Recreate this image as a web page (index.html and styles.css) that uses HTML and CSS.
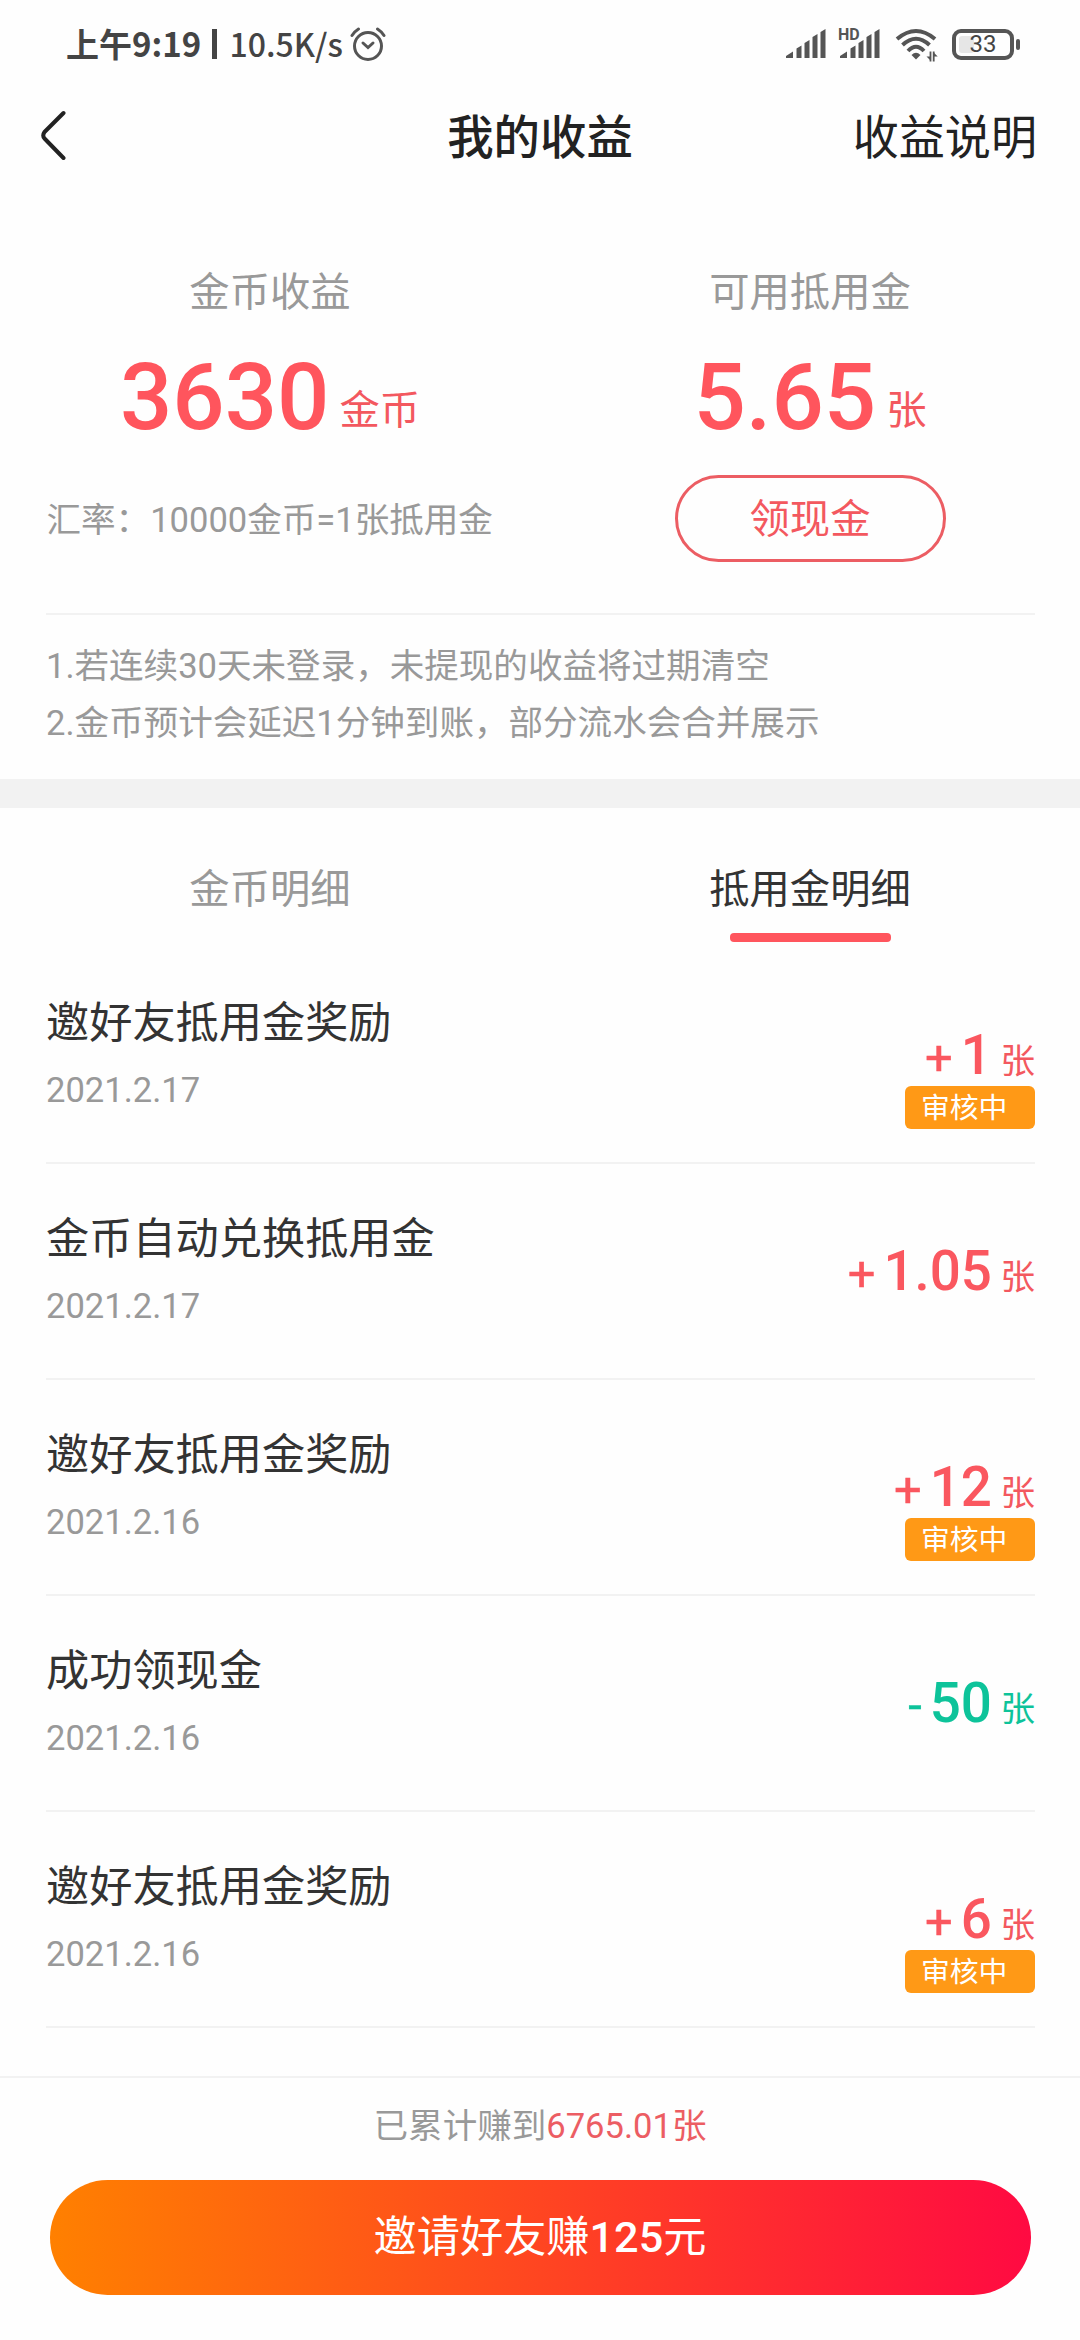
FILE: index.html
```html
<!DOCTYPE html>
<html lang="zh-CN">
<head>
<meta charset="utf-8">
<title>我的收益</title>
<link rel="stylesheet" href="styles.css">
</head>
<body>
<div class="status">
  <span class="time">上午9:19</span>
  <span class="bar"></span>
  <span class="speed">10.5K/s</span>
  <svg class="alarm" width="36" height="36" viewBox="0 0 36 36" fill="none" stroke="#555" stroke-width="3" stroke-linecap="round">
    <circle cx="18" cy="20" r="13.5"/>
    <path d="M2 9.500 Q4.500 5.500 8.500 3M34 9.500 Q31.500 5.500 27.500 3"/>
    <path d="M13 17 L18 21.500 L23 17"/>
  </svg>
  <svg class="signals" width="96" height="36" viewBox="0 0 96 36" fill="#555">
    <path d="M1 30 L8 25.5 V32 H1ZM11.500 22.500 L16.500 19.500 V32 H11.500ZM19.500 17 L24.500 14 V32 H19.500ZM27.500 11 L32.500 8 V32 H27.500ZM35.500 6 L40.500 3 V32 H35.500Z"/>
    <path d="M55 30 L62 25.500 V32 H55ZM65.500 22.500 L70.500 19.500 V32 H65.500ZM73.500 17 L78.500 14 V32 H73.500ZM81.500 11 L86.500 8 V32 H81.500ZM89.500 6 L94.500 3 V32 H89.500Z"/>
    <text x="53" y="13.500" class="hd">HD</text>
  </svg>
  <svg class="wifi" width="44" height="36" viewBox="0 0 44 36" fill="none" stroke="#555" stroke-width="4">
    <path d="M3 13 Q22 -3 41 13M8.500 19 Q22 6.500 35.500 19M14 25 Q22 16.500 30 25"/>
    <path d="M17.500 29 Q22 24.500 26.500 29 L22 33.500Z" fill="#555" stroke="none"/>
    <path d="M36.500 25.500 V35.500M39.700 35.500 V25.500" stroke-width="1.800"/>
    <path d="M36.500 34.500 L32.500 30.500 H36.500ZM39.700 26.500 L43.700 30.500 H39.700Z" fill="#555" stroke="none"/>
  </svg>
  <span class="battery"><span class="level"></span><span class="pct">33</span></span><span class="nub"></span>
</div>
<header class="nav">
  <svg class="back" width="28" height="52" viewBox="0 0 28 52" fill="none" stroke="#222" stroke-width="4" stroke-linecap="round" stroke-linejoin="round"><path d="M23.500 3 L4.500 22 Q2 25.500 4.500 28.500 L23.500 48"/></svg>
  <h1 class="title">我的收益</h1>
  <a class="help">收益说明</a>
</header>
<section class="summary">
  <div class="cols">
    <div class="col">
      <div class="label">金币收益</div>
      <div class="figure"><b class="num">3630</b><span class="unit">金币</span></div>
      <div class="rate">汇率：10000金币=1张抵用金</div>
    </div>
    <div class="col">
      <div class="label">可用抵用金</div>
      <div class="figure"><b class="num">5.65</b><span class="unit">张</span></div>
      <button class="cash">领现金</button>
    </div>
  </div>
  <div class="notes">
    <p>1.若连续30天未登录，未提现的收益将过期清空</p>
    <p>2.金币预计会延迟1分钟到账，部分流水会合并展示</p>
  </div>
</section>
<nav class="tabs">
  <div class="tab">金币明细</div>
  <div class="tab active">抵用金明细</div>
</nav>
<ul class="list">
  <li class="row"><div class="info"><div class="name">邀好友抵用金奖励</div><div class="date">2021.2.17</div></div>
    <div class="side"><div class="amount"><span class="sign">+</span><b>1</b><span class="zhang">张</span></div><span class="badge">审核中</span></div></li>
  <li class="row"><div class="info"><div class="name">金币自动兑换抵用金</div><div class="date">2021.2.17</div></div>
    <div class="side"><div class="amount"><span class="sign">+</span><b>1.05</b><span class="zhang">张</span></div></div></li>
  <li class="row"><div class="info"><div class="name">邀好友抵用金奖励</div><div class="date">2021.2.16</div></div>
    <div class="side"><div class="amount"><span class="sign">+</span><b>12</b><span class="zhang">张</span></div><span class="badge">审核中</span></div></li>
  <li class="row"><div class="info"><div class="name">成功领现金</div><div class="date">2021.2.16</div></div>
    <div class="side"><div class="amount out"><span class="sign">-</span><b>50</b><span class="zhang">张</span></div></div></li>
  <li class="row"><div class="info"><div class="name">邀好友抵用金奖励</div><div class="date">2021.2.16</div></div>
    <div class="side"><div class="amount"><span class="sign">+</span><b>6</b><span class="zhang">张</span></div><span class="badge">审核中</span></div></li>
</ul>
<footer class="footer">
  <div class="total">已累计赚到<span class="sum">6765.01张</span></div>
  <button class="invite">邀请好友赚<b>125</b>元</button>
</footer>
</body>
</html>
```
FILE: styles.css
```css
* { box-sizing: border-box; margin: 0; padding: 0; }
body {
  width: 1080px; height: 2340px; overflow: hidden;
  display: flex; flex-direction: column;
  background: #fefefe; color: #333;
  font-family: Roboto, "Noto Sans CJK SC", sans-serif;
}
button { font: inherit; border: 0; background: none; }
b { font-weight: 500; }

.status {
  height: 88px; padding: 0 60px 0 66px;
  display: flex; align-items: center;
  color: #444; font-family: "Noto Sans CJK SC", sans-serif; font-weight: 500;
}
.time { font-size: 33px; font-weight: 700; line-height: 40px; width: 136px; margin-bottom: 2px; white-space: nowrap; }
.bar { width: 4.500px; height: 30px; margin: 0 13px 0 10px; background: #444; }
.speed { font-size: 32px; line-height: 40px; width: 112px; margin-bottom: 3px; white-space: nowrap; }
.alarm { margin-left: 8.500px; }
.signals { margin-left: auto; margin-right: 13px; overflow: visible; }
.hd { font: 700 16px/20px Roboto, sans-serif; }
.wifi { margin-right: 14px; }
.battery {
  position: relative; width: 62px; height: 31px;
  border: 4.500px solid #555; border-radius: 9px;
  display: flex; align-items: center; justify-content: center;
}
.level { position: absolute; left: 3px; top: 3px; bottom: 3px; width: 15px; background: #e6e6e6; border-radius: 3px; }
.pct { position: relative; font: 400 24px/24px Roboto, sans-serif; color: #444; }
.nub { width: 4px; height: 11px; margin-left: 2px; background: #555; border-radius: 2px; }

.nav {
  height: 96px; padding: 0 43px 0 40px;
  display: grid; grid-template-columns: 1fr auto 1fr; align-items: center;
  color: #222; font-size: 46.08px; line-height: 64px;
}
.back { display: block; }
.title { font-size: 46.4px; font-weight: 500; padding: 3px 0 0 3px; }
.help { justify-self: end; padding-top: 3px; }

.summary { height: 624px; padding: 0 45px 0 46px; border-bottom: 29px solid #f2f2f2; }
.cols { display: flex; margin: 0 -45px 0 -46px; height: 429px; padding-top: 81px; }
.col { width: 540px; display: flex; flex-direction: column; align-items: center; }
.label { font-size: 40.32px; line-height: 56px; color: #999; }
.figure { display: flex; align-items: baseline; height: 108px; margin-top: 23px; line-height: 108px; color: #ff555d; }
.num { font-size: 92.16px; }
.unit { font-size: 40.32px; margin-left: 10px; color: #f3585f; position: relative; top: -5px; }
.rate { align-self: flex-start; margin: 44px 0 0 46.500px; font-size: 34.56px; line-height: 48px; color: #999; white-space: nowrap; }
.cash {
  width: 271px; height: 87px; margin-top: 23px;
  border: 3px solid #ec5d63; border-radius: 44px;
  color: #f3585f; font-size: 40.32px; line-height: 83px;
}
.notes { border-top: 2px solid #f2f2f2; padding-top: 22.500px; font-size: 34.56px; line-height: 57.6px; color: #999; }

.tabs { display: flex; height: 140px; padding-top: 51px; }
.tab { width: 540px; text-align: center; font-size: 40.32px; line-height: 62px; color: #999; }
.active { color: #333; }
.active::after { content: ""; display: block; width: 161px; height: 9px; margin: 12px auto 0; border-radius: 4px; background: #ff555d; }

.list { list-style: none; padding: 0 45px 0 46px; height: 1128px; }
.row { display: flex; justify-content: space-between; height: 216.1px; border-bottom: 2px solid #f2f2f2; padding-top: 43px; }
.name { font-size: 43.2px; line-height: 62px; padding-top: 2px; }
.date { font-size: 34.56px; line-height: 48px; margin-top: 11px; color: #999; }
.side { display: flex; flex-direction: column; align-items: flex-end; }
.amount { display: flex; align-items: baseline; line-height: 72px; height: 67px; margin-top: 28px; color: #fa575f; }
.amount b { font-size: 54.72px; }
.sign { font-size: 49px; margin-right: 8px; -webkit-text-stroke: 0.4px currentColor; }
.zhang { font-size: 34.56px; margin-left: 8.500px; color: #f3585f; position: relative; top: -1px; }
.amount.out, .out .zhang { color: #0dc39a; }
.badge { width: 130px; height: 43px; padding-left: 16px; background: #ff9916; border-radius: 6px; color: #fff; font-size: 28.8px; line-height: 44px; }

.footer { flex: 1; border-top: 2px solid #f2f2f2; display: flex; flex-direction: column; align-items: center; padding-top: 24px; }
.total { font-size: 34.56px; line-height: 48px; color: #999; }
.sum { color: #ec5d63; }
.invite {
  width: 981px; height: 115px; margin-top: 30px; border-radius: 58px;
  background: linear-gradient(90deg, #ff8000, #ff0a42);
  color: #fff; font-size: 43.2px; line-height: 115px;
}
```
